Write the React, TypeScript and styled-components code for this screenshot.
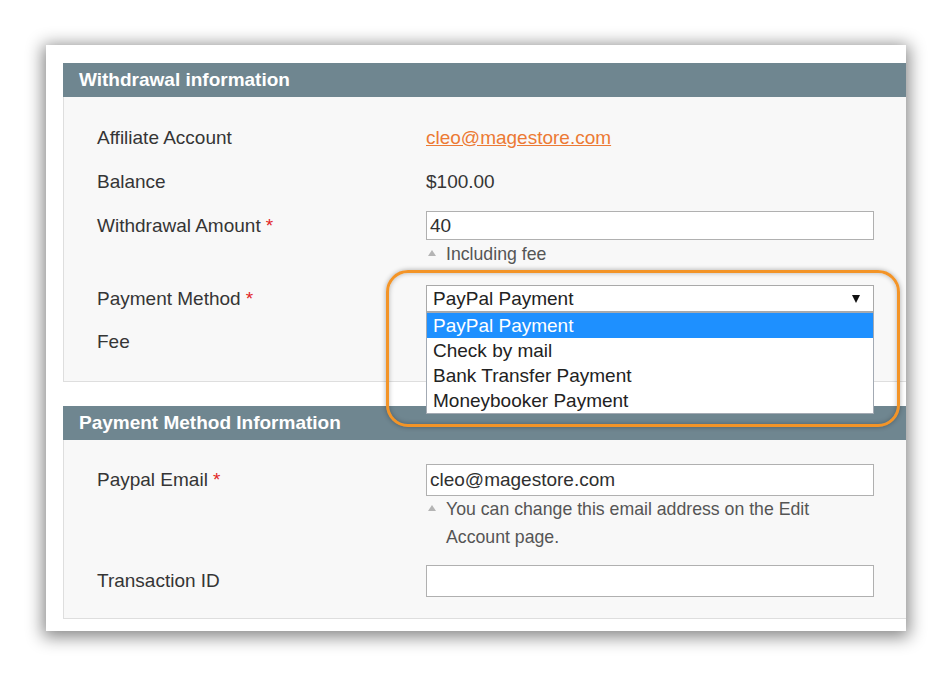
import React from 'react';
import styled, { createGlobalStyle } from 'styled-components';

const GlobalStyle = createGlobalStyle`
  html, body { margin: 0; padding: 0; background: #fff; }
  body { font-family: "Liberation Sans", Arial, sans-serif; color: #333; }
  * { box-sizing: border-box; }
`;

const Page = styled.div`
  width: 952px;
  height: 676px;
  overflow: hidden;
  padding-top: 45px;
`;

const Card = styled.div`
  margin-left: 46px;
  width: 860px;
  background: #fff;
  padding: 18px 0 12px 17px;
  box-shadow: 0 3px 16px 3px rgba(0, 0, 0, 0.48);
  display: flex;
  flex-direction: column;
  gap: 24px;
`;

const Section = styled.section`
  display: flex;
  flex-direction: column;
`;

const SectionHeader = styled.div`
  height: 34px;
  line-height: 34px;
  background: #6f8690;
  color: #fff;
  font-weight: bold;
  font-size: 19px;
  padding-left: 16px;
`;

const SectionBody = styled.div<{ $pt: number; $pb: number }>`
  background: #f8f8f8;
  border-left: 1px solid #dedede;
  border-bottom: 1px solid #dedede;
  padding: ${(p) => p.$pt}px 0 ${(p) => p.$pb}px 33px;
  display: flex;
  flex-direction: column;
`;

const Field = styled.div<{ $mb?: number }>`
  display: grid;
  grid-template-columns: 329px 448px;
  align-items: start;
  margin-bottom: ${(p) => p.$mb ?? 0}px;
`;

const Label = styled.div<{ $h: number }>`
  font-size: 19px;
  line-height: ${(p) => p.$h}px;
  color: #353535;
  white-space: nowrap;
`;

const Required = styled.span`
  color: #e22626;
  margin-left: 5px;
`;

const ValueCol = styled.div`
  display: flex;
  flex-direction: column;
`;

const ValueText = styled.div`
  font-size: 19px;
  line-height: 30px;
  color: #353535;
`;

const ValueLink = styled.a`
  font-size: 19px;
  line-height: 30px;
  color: #ec7a34;
  text-decoration: underline;
  cursor: pointer;
`;

const TextInput = styled.div<{ $h: number }>`
  height: ${(p) => p.$h}px;
  line-height: ${(p) => p.$h - 2}px;
  border: 1px solid #b0b0b0;
  background: #fff;
  padding-left: 3px;
  font-size: 19px;
  color: #303030;
`;

const Note = styled.div<{ $mt?: number }>`
  display: grid;
  grid-template-columns: 20px 400px;
  margin-top: ${(p) => p.$mt ?? 0}px;
  font-size: 17.7px;
  line-height: 28px;
  color: #555;
`;

const NoteMarker = styled.span`
  width: 0;
  height: 0;
  margin: 10px 0 0 2px;
  border-left: 4px solid transparent;
  border-right: 4px solid transparent;
  border-bottom: 6px solid #b4b4b4;
`;

const SelectWrap = styled.div`
  position: relative;
  width: 448px;
`;

const SelectBox = styled.div`
  height: 27px;
  border: 1px solid #a9a9a9;
  background: #fff;
  padding: 0 13px 0 6px;
  display: flex;
  align-items: center;
  justify-content: space-between;
  font-size: 19px;
  color: #222;
`;

const Arrow = styled.span`
  width: 0;
  height: 0;
  border-left: 4.5px solid transparent;
  border-right: 4.5px solid transparent;
  border-top: 8px solid #111;
`;

const DropList = styled.ul`
  position: absolute;
  top: 100%;
  left: 0;
  width: 100%;
  margin: 0;
  padding: 0;
  list-style: none;
  background: #fff;
  border: 1px solid #a3aab3;
  z-index: 5;
`;

const Option = styled.li<{ $active?: boolean }>`
  height: 25px;
  line-height: 25px;
  padding-left: 6px;
  font-size: 19px;
  color: ${(p) => (p.$active ? '#fff' : '#222')};
  background: ${(p) => (p.$active ? '#1e90ff' : '#fff')};
`;

const Callout = styled.div`
  position: absolute;
  left: -40px;
  top: -15px;
  width: 514px;
  height: 157px;
  border: 3px solid #f39427;
  border-radius: 22px;
  box-shadow: 0 0 5px rgba(0, 0, 0, 0.32), inset 0 0 5px rgba(0, 0, 0, 0.28);
  pointer-events: none;
  z-index: 6;
`;

const options = ['PayPal Payment', 'Check by mail', 'Bank Transfer Payment', 'Moneybooker Payment'];

export default function App() {
  return (
    <>
      <GlobalStyle />
      <Page>
        <Card>
          <Section>
            <SectionHeader>Withdrawal information</SectionHeader>
            <SectionBody $pt={26} $pb={24}>
              <Field $mb={14}>
                <Label $h={30}>Affiliate Account</Label>
                <ValueCol>
                  <div>
                    <ValueLink>cleo@magestore.com</ValueLink>
                  </div>
                </ValueCol>
              </Field>
              <Field $mb={14}>
                <Label $h={30}>Balance</Label>
                <ValueText>$100.00</ValueText>
              </Field>
              <Field $mb={17}>
                <Label $h={29}>
                  Withdrawal Amount<Required>*</Required>
                </Label>
                <ValueCol>
                  <TextInput $h={29}>40</TextInput>
                  <Note>
                    <NoteMarker />
                    <span>Including fee</span>
                  </Note>
                </ValueCol>
              </Field>
              <Field $mb={15}>
                <Label $h={27}>
                  Payment Method<Required>*</Required>
                </Label>
                <SelectWrap>
                  <SelectBox>
                    <span>PayPal Payment</span>
                    <Arrow />
                  </SelectBox>
                  <DropList>
                    {options.map((o, i) => (
                      <Option key={o} $active={i === 0}>
                        {o}
                      </Option>
                    ))}
                  </DropList>
                  <Callout />
                </SelectWrap>
              </Field>
              <Field>
                <Label $h={30}>Fee</Label>
              </Field>
            </SectionBody>
          </Section>
          <Section>
            <SectionHeader>Payment Method Information</SectionHeader>
            <SectionBody $pt={24} $pb={21}>
              <Field $mb={14}>
                <Label $h={32}>
                  Paypal Email<Required>*</Required>
                </Label>
                <ValueCol>
                  <TextInput $h={32}>cleo@magestore.com</TextInput>
                  <Note $mt={-1}>
                    <NoteMarker />
                    <span>You can change this email address on the Edit Account page.</span>
                  </Note>
                </ValueCol>
              </Field>
              <Field>
                <Label $h={32}>Transaction ID</Label>
                <TextInput $h={32} />
              </Field>
            </SectionBody>
          </Section>
        </Card>
      </Page>
    </>
  );
}
